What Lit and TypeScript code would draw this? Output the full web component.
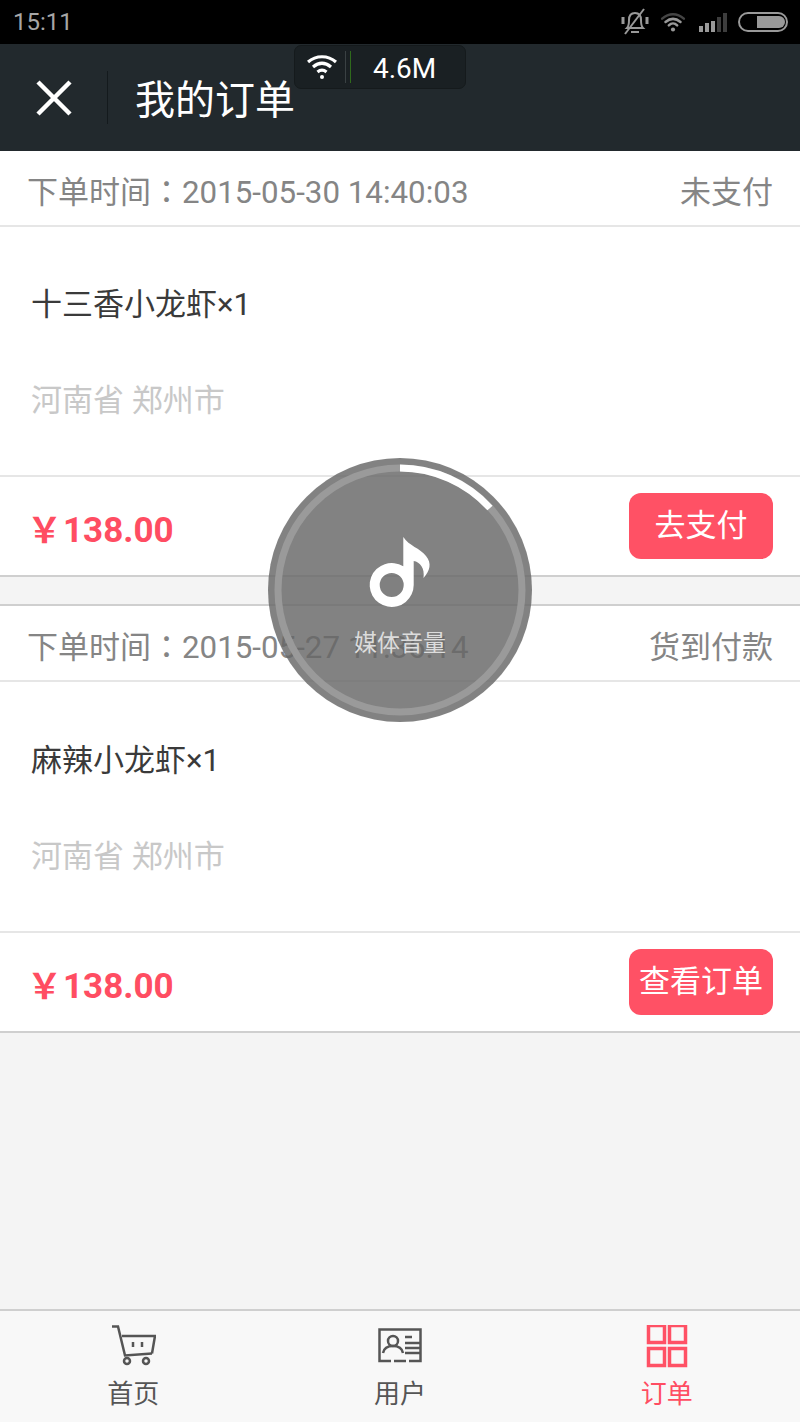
import { LitElement, html, css, svg } from "lit";
import { customElement } from "lit/decorators.js";

const orders = [
  { time: "2015-05-30 14:40:03", status: "未支付", item: "十三香小龙虾×1", action: "去支付" },
  { time: "2015-05-27 11:36:14", status: "货到付款", item: "麻辣小龙虾×1", action: "查看订单" },
];

@customElement("app-root")
export class AppRoot extends LitElement {
  static styles = css`
    :host { display: block; width: 800px; height: 1422px; position: relative; overflow: hidden; background: #f4f4f4;
      font-family: Roboto, "Noto Sans CJK SC", sans-serif; }
    .page { display: flex; flex-direction: column; height: 1422px; }
    .status { height: 44px; flex: none; background: #000; display: flex; align-items: center; justify-content: space-between; padding: 0 12px 0 13px; color: #a6a6a6; font-size: 24px; box-sizing: border-box; }
    .status-icons { display: flex; align-items: center; }
    .status svg { display: block; }
    .i-wifi { margin-left: 10px; }
    .i-signal { margin-left: 13px; }
    .i-batt { margin-left: 11px; }
    .header { height: 107px; flex: none; background: #22292d; display: flex; align-items: center; color: #fff; }
    .close { width: 108px; height: 53px; border-right: 1px solid #141a1d; box-sizing: border-box; display: flex; align-items: center; justify-content: center; }
    .title { font-size: 40px; margin: 6px 0 0 27px; line-height: 1; }
    .order { background: #fff; border-bottom: 2px solid #cfcfcf; }
    .order + .order { margin-top: 27px; border-top: 2px solid #cfcfcf; }
    .row-head { height: 76px; display: flex; align-items: center; justify-content: space-between; padding: 2px 27px 0 27px; box-sizing: border-box; border-bottom: 2px solid #e6e6e6; color: #858585; font-size: 31px; }
    .colon { font-family: "Noto Sans CJK TC", sans-serif; }
    .time { font-size: 31.3px; }
    .body { height: 250px; border-bottom: 2px solid #e6e6e6; box-sizing: border-box; padding: 0 31px; display: flex; flex-direction: column; }
    .order + .order .body { height: 251px; }
    .item { color: #3a3a3a; font-size: 31px; line-height: 44px; margin-top: 56px; }
    .order + .order .item { margin-top: 57px; }
    .addr { color: #c8c8c8; font-size: 31px; line-height: 44px; margin-top: 52px; }
    .foot { height: 98px; display: flex; align-items: center; justify-content: space-between; padding: 0 27px 0 32px; box-sizing: border-box; }
    .price { color: #ff4d62; font-size: 35px; font-weight: 700; display: flex; align-items: center; margin-top: 8px; }
    .yen { margin: 0 1px 6px -5px; }
    .btn { height: 66px; min-width: 144px; box-sizing: border-box; background: #ff5165; border-radius: 12px; color: #fff; font-size: 31px; display: flex; align-items: center; justify-content: center; padding-bottom: 8px; }
    .spacer { flex: 1; }
    .tabs { height: 113px; flex: none; border-top: 2px solid #cfcfcf; background: #f8f8f8; display: grid; grid-template-columns: repeat(3, 1fr); box-sizing: border-box; }
    .tab { display: flex; flex-direction: column; align-items: center; color: #555; font-size: 26px; line-height: 30px; padding-top: 14px; }
    .tab svg { display: block; height: 44px; margin-bottom: 10px; }
    .tab.on { color: #ff4d62; }
    .net { position: absolute; left: 294px; top: 45px; width: 172px; height: 44px; box-sizing: border-box; background: #1a2023; border: 1px solid #151a1c; border-radius: 7px; color: #fff; display: flex; align-items: center; }
    .net svg { margin-left: 12px; display: block; }
    .net-sep { width: 4px; height: 32px; margin-left: 8px; border-left: 1px solid #3a4143; border-right: 1px solid #2f6a1c; box-sizing: content-box; }
    .net-val { font-size: 28px; margin: 2px 0 0 22px; }
    .hud { position: absolute; left: 268px; top: 458px; width: 264px; height: 264px; }
    .hud svg { display: block; position: absolute; inset: 0; }
    .hud-label { position: absolute; left: 0; right: 0; top: 172px; text-align: center; color: #dcdcdc; font-size: 23px; line-height: 28px; }
  `;

  private order(o: (typeof orders)[number]) {
    return html`<section class="order">
      <div class="row-head"><span>下单时间<span class="colon">：</span><span class="time">${o.time}</span></span><span>${o.status}</span></div>
      <div class="body"><div class="item">${o.item}</div><div class="addr">河南省 郑州市</div></div>
      <div class="foot"><div class="price"><span class="yen">￥</span>138.00</div><div class="btn">${o.action}</div></div>
    </section>`;
  }

  render() {
    return html`<div class="page">
        <div class="status">
          <span>15:11</span>
          <div class="status-icons">
            <svg width="30" height="28" viewBox="0 0 30 28" fill="none" stroke="#999" stroke-width="2">
              <path d="M7 20c2-2 2-4 2-8 0-4 2-7 6-7s6 3 6 7c0 4 0 6 2 8z"/><path d="M11 24h8"/><path d="M3 9v7M27 9v7" stroke-width="3"/><path d="M5 26 24 1" />
            </svg>
            <svg class="i-wifi" width="26" height="20" viewBox="0 0 30 24" fill="none" stroke-linecap="round">
              <path d="M2 8c8-7 18-7 26 0" stroke="#444" stroke-width="3"/><path d="M6 12c6-5 12-5 18 0" stroke="#999" stroke-width="3"/><path d="M10 16c3-3 7-3 10 0" stroke="#999" stroke-width="3"/><circle cx="15" cy="21" r="2.5" fill="#999"/>
            </svg>
            <svg class="i-signal" width="28" height="20" viewBox="0 0 28 20">
              <rect x="0" y="14" width="4" height="6" fill="#999"/><rect x="6" y="11" width="4" height="9" fill="#999"/><rect x="12" y="9" width="4" height="11" fill="#999"/><rect x="18" y="5" width="4" height="15" fill="#3d3d3d"/><rect x="24" y="1" width="4" height="19" fill="#3d3d3d"/>
            </svg>
            <svg class="i-batt" width="50" height="20" viewBox="0 0 50 20">
              <rect x="1" y="1" width="48" height="18" rx="9" fill="none" stroke="#999" stroke-width="2"/><path d="M19 4h22a6 6 0 0 1 0 12H19z" fill="#999"/>
            </svg>
          </div>
        </div>
        <div class="header">
          <div class="close"><svg width="36" height="36" viewBox="0 0 36 36"><path d="M2 2 34 34M34 2 2 34" stroke="#fff" stroke-width="4.5"/></svg></div>
          <div class="title">我的订单</div>
        </div>
        ${orders.map((o) => this.order(o))}
        <div class="spacer"></div>
        <nav class="tabs">
          <div class="tab">
            <svg width="45" height="44" viewBox="0 0 45 44" fill="none" stroke="#555" stroke-width="2.5">
              <path d="M1 1.500h6l7 29 27-2"/><path d="M11 11h33l-3 17.500"/><path d="M22 17v5M31 17v5"/><circle cx="16" cy="36" r="3"/><circle cx="35" cy="36" r="3"/>
            </svg>
            <span>首页</span>
          </div>
          <div class="tab">
            <svg width="44" height="44" viewBox="0 0 44 44" fill="none" stroke="#555" stroke-width="2.5">
              <path d="M13 36H1.500V4.500h41V36H31M16 36h12"/><circle cx="15" cy="16" r="5"/><path d="M5 28c1-5 5-7 10-7s9 2 10 7"/><path d="M27 12h7M27 18h15M27 23h15M27 28h15"/>
            </svg>
            <span>用户</span>
          </div>
          <div class="tab on">
            <svg width="42" height="44" viewBox="0 1 42 44" fill="none" stroke="#ff5165" stroke-width="3.500">
              <rect x="2.500" y="1.500" width="16" height="17"/><rect x="23.500" y="1.500" width="16" height="17"/><rect x="2.500" y="24.500" width="16" height="17"/><rect x="23.500" y="24.500" width="16" height="17"/>
            </svg>
            <span>订单</span>
          </div>
        </nav>
      </div>
      <div class="net">
        <svg width="30" height="26" viewBox="0 0 30 26" fill="none" stroke="#fff" stroke-width="3.200">
          <path d="M1 8c8-7 20-7 28 0"/><path d="M6 13c6-5 12-5 18 0"/><path d="M10.500 18c3-2.500 6-2.500 9 0"/><circle cx="15" cy="23" r="2" fill="#fff" stroke="none"/>
        </svg>
        <div class="net-sep"></div>
        <span class="net-val">4.6M</span>
      </div>
      <div class="hud">
        <svg width="264" height="264" viewBox="0 0 264 264" fill="none">
          <circle cx="132" cy="132" r="132" fill="rgba(102,102,102,.82)"/>
          <circle cx="132" cy="132" r="122" stroke="#9a9a9a" stroke-width="7"/>
          <path d="M132 10A122 122 0 0 1 222 50" stroke="#fff" stroke-width="7"/>
          ${svg`<path fill="#fff" fill-rule="evenodd" d="M135.300 79C141 88 152 90 158 98C164 105 162 113 155.500 120C157 110 152 104 145.700 103V127A22 22 0 1 1 135.300 108.300ZM123.700 115a12 12 0 1 0 0 24 12 12 0 0 0 0-24Z"/>`}
        </svg>
        <div class="hud-label">媒体音量</div>
      </div>`;
  }
}
